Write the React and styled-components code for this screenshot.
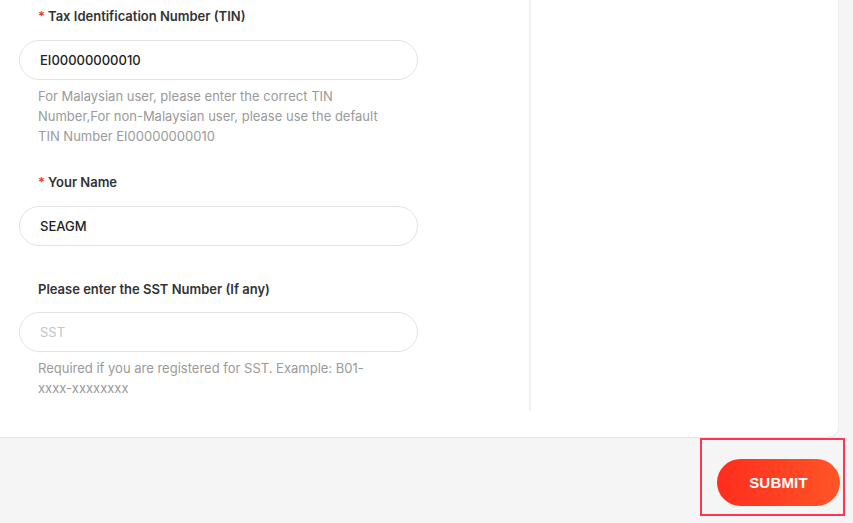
import React from "react";
import styled, { createGlobalStyle } from "styled-components";

const GlobalStyle = createGlobalStyle`
  html, body {
    margin: 0;
    padding: 0;
    background: #f5f5f5;
    font-family: Inter, "Noto Sans", sans-serif;
  }
`;

const Page = styled.div`
  width: 853px;
  height: 523px;
  overflow: hidden;
  display: flex;
  flex-direction: column;
`;

const Card = styled.div`
  width: 838px;
  height: 437px;
  box-sizing: border-box;
  background: #ffffff;
  border-bottom-right-radius: 10px;
  box-shadow: 0 1px 0 #e6e6e6, 1px 0 0 #eeeeee;
  display: flex;
  flex-direction: row;
`;

const FormColumn = styled.div`
  width: 531px;
  height: 411px;
  box-sizing: border-box;
  padding: 6px 0 0 19px;
  border-right: 2px solid #f1f1f1;
  display: flex;
  flex-direction: column;
`;

const Field = styled.div`
  display: flex;
  flex-direction: column;
  width: 399px;
  margin-top: ${(props) => props.gap || 0}px;
`;

const Label = styled.div`
  padding-left: 19px;
  font-size: 13px;
  line-height: 20px;
  font-weight: 600;
  color: #333333;
  margin-bottom: ${(props) => props.space || 14}px;
`;

const Star = styled.span`
  color: #ff2d2d;
  margin-right: 3px;
`;

const Input = styled.input`
  box-sizing: border-box;
  width: 399px;
  height: 40px;
  border: 1px solid #e3e3e3;
  border-radius: 20px;
  padding: 0 20px;
  font-family: Inter, "Noto Sans", sans-serif;
  font-size: 13px;
  font-weight: 500;
  color: #222222;
  outline: none;
  background: #ffffff;

  &::placeholder {
    color: #c4c4c4;
    font-weight: 400;
  }
`;

const Help = styled.div`
  margin-top: 6px;
  padding: 0 19px;
  width: 350px;
  font-size: 13px;
  line-height: 20px;
  color: #9a9a9a;
`;

const Footer = styled.div`
  display: flex;
  justify-content: flex-end;
  padding-right: 8px;
`;

const Highlight = styled.div`
  box-sizing: border-box;
  width: 145px;
  height: 78px;
  border: 2px solid #ff3550;
  padding: 19px 0 0 15px;
  margin-top: 1px;
`;

const SubmitButton = styled.button`
  width: 123px;
  height: 47px;
  border: none;
  border-radius: 24px;
  background: linear-gradient(90deg, #ff2d1e 0%, #ff5526 100%);
  color: #ffffff;
  font-family: "Liberation Sans", Arial, sans-serif;
  font-size: 15px;
  font-weight: 700;
  letter-spacing: 0.2px;
  cursor: pointer;
`;

export default function App() {
  return (
    <>
      <GlobalStyle />
      <Page>
        <Card>
          <FormColumn>
            <Field>
              <Label>
                <Star>*</Star>Tax Identification Number (TIN)
              </Label>
              <Input defaultValue="EI00000000010" />
              <Help>
                For Malaysian user, please enter the correct TIN Number,For
                non-Malaysian user, please use the default TIN Number
                EI00000000010
              </Help>
            </Field>
            <Field gap={26}>
              <Label>
                <Star>*</Star>Your Name
              </Label>
              <Input defaultValue="SEAGM" />
            </Field>
            <Field gap={33}>
              <Label space={13}>Please enter the SST Number (If any)</Label>
              <Input placeholder="SST" />
              <Help>
                Required if you are registered for SST. Example:
                B01-xxxx-xxxxxxxx
              </Help>
            </Field>
          </FormColumn>
        </Card>
        <Footer>
          <Highlight>
            <SubmitButton>SUBMIT</SubmitButton>
          </Highlight>
        </Footer>
      </Page>
    </>
  );
}
